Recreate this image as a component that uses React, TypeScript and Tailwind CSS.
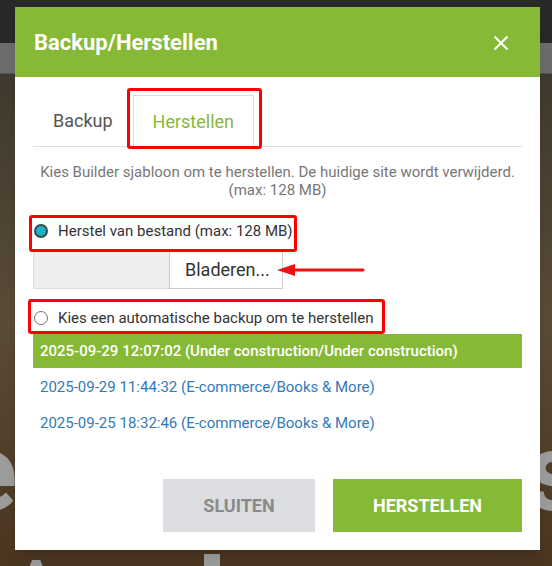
import React from "react";

export default function App() {
  return (
    <div
      className="relative w-[552px] h-[566px] overflow-hidden bg-[#4a4031]"
      style={{ fontFamily: "Roboto, 'Liberation Sans', sans-serif" }}
    >
      {/* page behind the modal */}
      <div className="flex flex-col h-full">
        <div className="h-[43px] bg-[#292929]" />
        <div className="h-[31px] bg-[#6c6c6c] border-b border-[#555]" />
        <div className="flex-1 bg-gradient-to-b from-[#3f3a2e] via-[#5a4b37] to-[#4a3520]" />
      </div>
      <div className="absolute left-[-42px] top-[418px] text-[110px] font-bold text-[#9c9c9c] leading-none">e</div>
      <div className="absolute left-[526px] top-[418px] text-[110px] font-bold text-[#9c9c9c] leading-none">s</div>
      <div className="absolute left-[16px] top-[552px] text-[60px] font-bold text-[#9c9c9c] leading-none">A</div>
      <div className="absolute left-[204px] top-[554px] w-[16px] h-[20px] bg-[#9c9c9c]" />

      {/* modal */}
      <div className="absolute left-[15px] top-[7px] w-[525px] h-[543px] bg-white flex flex-col shadow-lg">
        <div className="h-[70px] bg-[#86b935] flex items-center justify-between pl-[19px] pr-[31px] shrink-0">
          <span className="text-white text-[22px] font-bold">Backup/Herstellen</span>
          <svg width="16" height="16" viewBox="0 0 16 16" className="mt-[1px]">
            <path d="M1.5 1.5 L14.5 14.5 M14.5 1.5 L1.5 14.5" stroke="white" strokeWidth="2" fill="none" />
          </svg>
        </div>

        <div className="px-[18px] flex flex-col flex-1">
          {/* tabs */}
          <div className="mt-[18px] flex border-b border-[#ddd]">
            <div className="h-[51px] pl-[20px] pr-[18px] mr-[2px] flex items-center text-[18px] text-[#555]">Backup</div>
            <div className="h-[52px] -mb-px px-[19px] flex items-center text-[18px] text-[#86b935] border border-[#ddd] border-b-white bg-white">
              Herstellen
            </div>
          </div>

          <p className="mt-[16px] text-center text-[15px] leading-[18px] text-[#777]">
            Kies Builder sjabloon om te herstellen. De huidige site wordt verwijderd.
            <br />
            (max: 128 MB)
          </p>

          <label className="mt-[22px] h-[20px] flex items-center text-[15px] text-[#333]">
            <span className="ml-[1px] w-[14px] h-[14px] rounded-full border-2 border-[#3b4b50] bg-[#19b4c8] shrink-0" />
            <span className="ml-[10px]">Herstel van bestand (max: 128 MB)</span>
          </label>

          <div className="mt-[8px] w-[250px] h-[40px] flex">
            <div className="w-[136px] h-full bg-[#eeeeee] border border-[#ddd] border-r-0" />
            <div className="flex-1 h-full border border-[#ccc] bg-white flex items-center pl-[15px] text-[18px] text-[#333]">
              Bladeren...
            </div>
          </div>

          <label className="mt-[19px] h-[20px] flex items-center text-[15px] text-[#333]">
            <span className="ml-[1px] w-[14px] h-[14px] rounded-full border border-[#777] bg-white shrink-0" />
            <span className="ml-[10px]">Kies een automatische backup om te herstellen</span>
          </label>

          <div className="mt-[6px] flex flex-col gap-[2px] text-[15px]">
            <div className="h-[34px] bg-[#86b935] text-white font-medium flex items-center pl-[7px]">
              2025-09-29 12:07:02 (Under construction/Under construction)
            </div>
            <div className="h-[34px] text-[#337ab7] flex items-center pl-[7px]">
              2025-09-29 11:44:32 (E-commerce/Books &amp; More)
            </div>
            <div className="h-[34px] text-[#337ab7] flex items-center pl-[7px]">
              2025-09-25 18:32:46 (E-commerce/Books &amp; More)
            </div>
          </div>

          <div className="mt-auto mb-[18px] flex justify-end gap-[18px]">
            <button className="w-[152px] h-[53px] bg-[#dcdde0] text-[#8a8a8a] text-[18px] font-bold uppercase">
              Sluiten
            </button>
            <button className="w-[189px] h-[53px] bg-[#86b935] text-white text-[18px] font-bold uppercase">
              Herstellen
            </button>
          </div>
        </div>
      </div>

      {/* annotations */}
      <div className="absolute left-[127px] top-[88px] w-[135px] h-[61px] border-[3px] border-[#ff0000] rounded-[3px]" />
      <div className="absolute left-[29px] top-[215px] w-[268px] h-[37px] border-[3px] border-[#ff0000] rounded-[3px]" />
      <div className="absolute left-[28px] top-[299px] w-[357px] h-[35px] border-[3px] border-[#ff0000] rounded-[3px]" />
      <svg className="absolute left-[276px] top-[262px]" width="90" height="16" viewBox="0 0 90 16">
        <path d="M1 8 L19 2 L19 14 Z" fill="#ee1111" />
        <path d="M18 8 L87 8" stroke="#ee1111" strokeWidth="3" strokeLinecap="round" />
      </svg>
    </div>
  );
}
